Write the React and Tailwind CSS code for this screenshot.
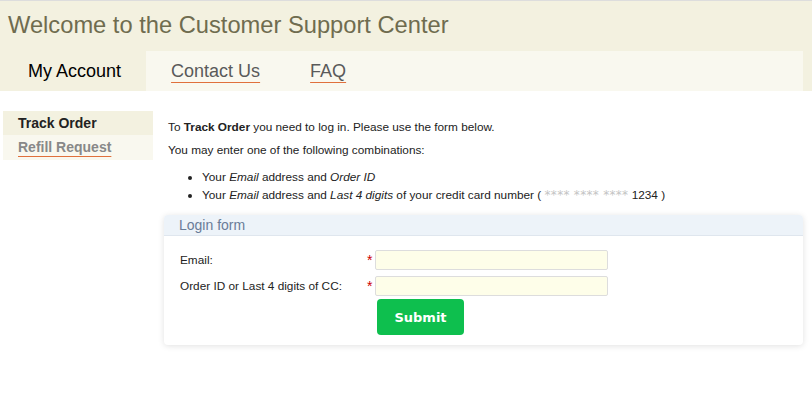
import React from "react";

const tabs = [
  { label: "My Account", active: true },
  { label: "Contact Us" },
  { label: "FAQ" },
];

const App = () => {
  return (
    <div className="w-[812px] h-[400px] bg-white overflow-hidden font-['Liberation_Sans',Arial,sans-serif]">
      {/* header */}
      <div className="border-t border-[#dddddd] bg-[#f3f1e0] h-[51px] flex items-center pl-[8px]">
        <h1 className="text-[23.7px] text-[#6f6c4f] leading-none">Welcome to the Customer Support Center</h1>
      </div>

      {/* tabs */}
      <div className="bg-[#f3f1e0]">
        <div className="ml-[3px] w-[800px] h-[40px] bg-[#f9f8ef] flex">
          {tabs.map((t, i) => (
            <div
              key={i}
              className={
                t.active
                  ? "px-[25px] flex items-center bg-[#f3f1e0] text-[18px] text-black"
                  : "px-[25px] flex items-center text-[18px] text-[#5a5a5a]"
              }
            >
              <span className={t.active ? "" : "underline decoration-[#e0703c] underline-offset-[5px]"}>{t.label}</span>
            </div>
          ))}
        </div>
      </div>

      <div className="flex mt-[20px]">
        {/* sidebar */}
        <div className="ml-[3px] w-[150px] shrink-0">
          <div className="h-[24px] bg-[#f3f1e0] pl-[15px] flex items-center text-[14px] font-bold text-[#222]">Track Order</div>
          <div className="h-[25px] bg-[#f9f8ef] pl-[15px] flex items-center text-[14px] font-bold text-[#888]">
            <span className="underline decoration-[#e0703c] underline-offset-[4px]">Refill Request</span>
          </div>
        </div>

        {/* content */}
        <div className="ml-[11px] w-[639px] text-[11.8px] text-[#222]">
          <p className="mt-[8px] ml-[4px]">
            To <b>Track Order</b> you need to log in. Please use the form below.
          </p>
          <p className="mt-[5px] ml-[4px]">You may enter one of the following combinations:</p>
          <ul className="list-disc ml-[38px] mt-[9px] leading-[18px]">
            <li>
              Your <i>Email</i> address and <i>Order ID</i>
            </li>
            <li className="h-[18px]">
              Your <i>Email</i> address and <i>Last 4 digits</i> of your credit card number ({" "}
              <span className="text-[#c4c4c4] text-[12px] leading-[18px] tracking-[0.3px] font-['DejaVu_Sans',Verdana,sans-serif]">**** **** ****</span> 1234 )
            </li>
          </ul>

          {/* login form */}
          <div className="mt-[11px] rounded-[4px] bg-white shadow-[0_1px_6px_rgba(0,0,0,0.12)] overflow-hidden">
            <div className="h-[21px] bg-[#edf3f9] border-b border-[#dfe6ee] pl-[15px] flex items-center text-[14px] text-[#6a7c98]">
              Login form
            </div>
            <div className="pl-[16px] pt-[14px] pb-[10px]">
              <div className="flex items-center h-[20px]">
                <span className="w-[187px]">Email:</span>
                <span className="w-[8px] text-[#cc0000] text-[14px]">*</span>
                <input className="w-[233px] h-[20px] bg-[#fefee9] border border-[#dddddd] rounded-[2px] outline-none" />
              </div>
              <div className="flex items-center h-[20px] mt-[6px]">
                <span className="w-[187px]">Order ID or Last 4 digits of CC:</span>
                <span className="w-[8px] text-[#cc0000] text-[14px]">*</span>
                <input className="w-[233px] h-[20px] bg-[#fefee9] border border-[#dddddd] rounded-[2px] outline-none" />
              </div>
              <button className="ml-[197px] mt-[3px] w-[87px] h-[36px] rounded-[4px] bg-[#0ebf4e] text-white text-[13px] font-bold font-['DejaVu_Sans',Verdana,sans-serif]">
                Submit
              </button>
            </div>
          </div>
        </div>
      </div>
    </div>
  );
};

export default App;
